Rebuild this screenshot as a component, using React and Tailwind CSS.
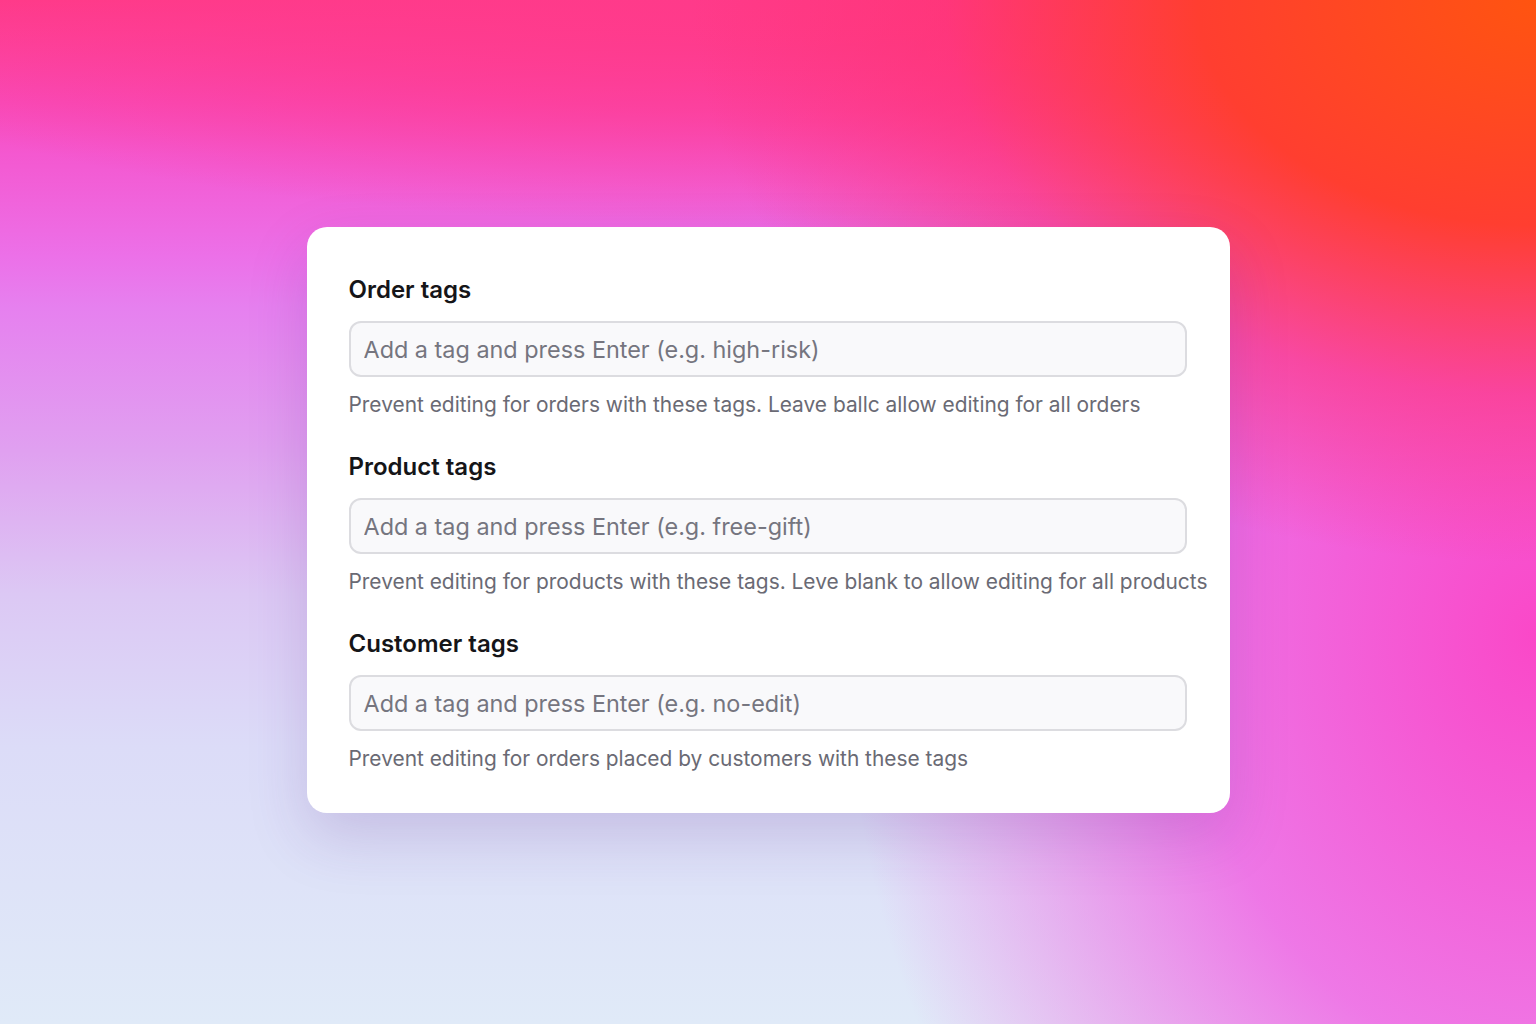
import { useState } from 'react';

const fields = [
  {
    label: 'Order tags',
    placeholder: 'Add a tag and press Enter (e.g. high-risk)',
    help: 'Prevent editing for orders with these tags. Leave ballc allow editing for all orders',
  },
  {
    label: 'Product tags',
    placeholder: 'Add a tag and press Enter (e.g. free-gift)',
    help: 'Prevent editing for products with these tags. Leve blank to allow editing for all products',
  },
  {
    label: 'Customer tags',
    placeholder: 'Add a tag and press Enter (e.g. no-edit)',
    help: 'Prevent editing for orders placed by customers with these tags',
  },
];

function TagField({ label, placeholder, help }) {
  const [value, setValue] = useState('');
  return (
    <div className="flex flex-col">
      <label className="text-[24px] leading-[32px] font-semibold text-[#151518]">{label}</label>
      <input
        type="text"
        value={value}
        onChange={(e) => setValue(e.target.value)}
        placeholder={placeholder}
        className="mt-[15px] h-[56px] w-full rounded-[12px] border-2 border-[#dcdce0] bg-[#f9f9fb] px-[13px] text-[23.4px] text-[#333] placeholder:text-[#75757f] outline-none"
      />
      <p className="mt-[14px] text-[20.9px] leading-[28px] text-[#6a6a74] whitespace-nowrap">{help}</p>
    </div>
  );
}

export default function App() {
  return (
    <div className="min-h-screen w-full flex items-start justify-center pt-[227px] font-['Inter','Liberation_Sans',sans-serif] bg-[radial-gradient(ellipse_55%_55%_at_100%_0%,#ff5410_0%,#ff3e30_40%,rgba(255,50,110,0.55)_70%,transparent_100%),radial-gradient(ellipse_65%_22%_at_50%_0%,#ff3a8a_0%,rgba(255,58,140,0.6)_50%,transparent_100%),radial-gradient(ellipse_45%_85%_at_100%_62%,#fa48c8_0%,rgba(242,92,226,0.8)_50%,transparent_100%),linear-gradient(180deg,#ff3a88_0%,#f84aba_10%,#f458d0_15%,#ec70e8_25%,#e680ef_30%,#e0a0f0_44%,#dcc8f4_58%,#dcdcf8_73%,#e0eaf8_100%)]">
      <div className="w-[923px] rounded-[20px] bg-white pl-[42px] pr-[43px] pt-[47px] pb-[40px] flex flex-col gap-[32px] shadow-[0_24px_60px_rgba(90,40,140,0.18)]">
        {fields.map((f) => (
          <TagField key={f.label} {...f} />
        ))}
      </div>
    </div>
  );
}
